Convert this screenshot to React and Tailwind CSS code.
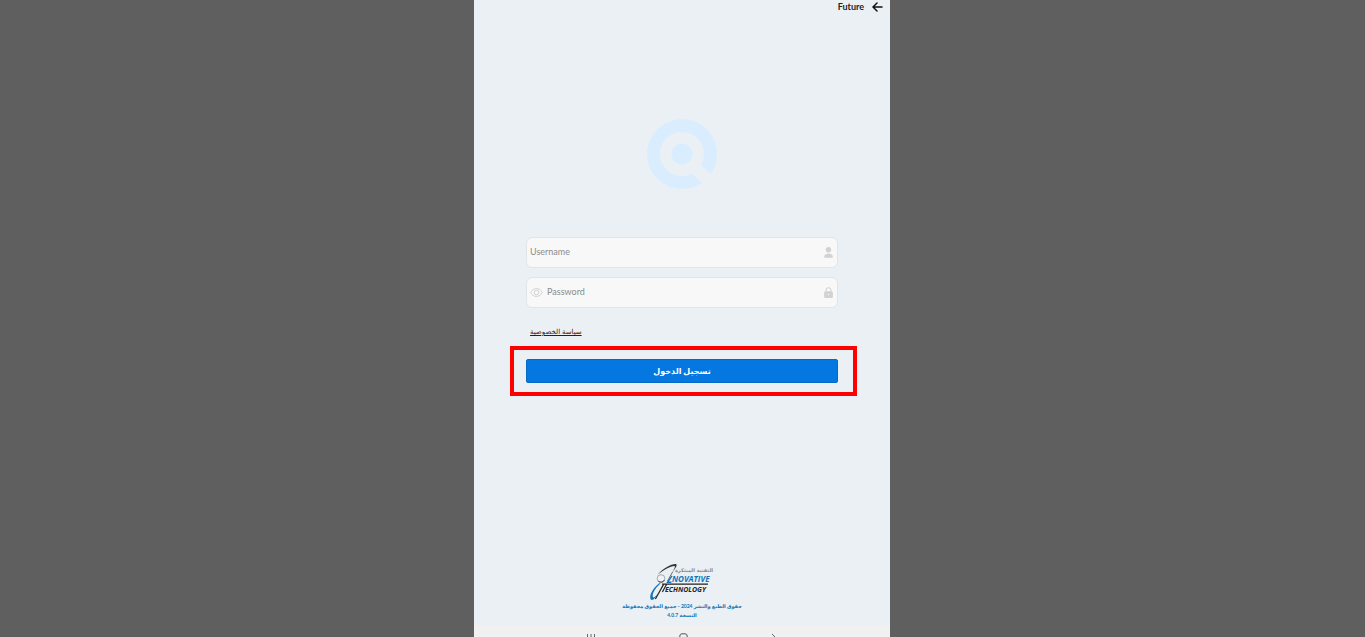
import React, { useState } from 'react'

const AppMark = () => (
  <svg viewBox="0 0 70 70" className="w-[70px] h-[70px]" aria-hidden="true">
    <path
      d="M63.67 55.07 L54 46.3 A22.1 22.1 0 1 0 45.3 54.6 L54.5 64.06 A35 35 0 1 1 63.67 55.07 Z"
      fill="#daedfe"
    />
    <circle cx="35" cy="35" r="10.5" fill="#daedfe" />
  </svg>
)

const BackArrow = () => (
  <svg viewBox="0 0 11 10" className="w-[11px] h-[10px]" fill="none" stroke="#111" strokeWidth="1.5" strokeLinecap="round" strokeLinejoin="round">
    <path d="M10 5H1.2M5 1L1 5l4 4" />
  </svg>
)

const EyeIcon = () => (
  <svg viewBox="0 0 13 9" className="w-[13px] h-[9px]" fill="none" stroke="#c9c9c9" strokeWidth="0.8">
    <path d="M0.6 4.5C2 2 4 0.6 6.5 0.6S11 2 12.4 4.5C11 7 9 8.4 6.5 8.4S2 7 0.6 4.5Z" />
    <circle cx="6.5" cy="4.5" r="2.3" />
  </svg>
)

const UserIcon = () => (
  <svg viewBox="0 0 9 11" className="w-[9px] h-[11px]" fill="#d2d2d2">
    <circle cx="4.5" cy="2.8" r="2.7" />
    <path d="M0.2 10.8V9.8C0.2 7.8 2.2 6.6 4.5 6.6S8.8 7.8 8.8 9.8V10.8Z" />
  </svg>
)

const LockIcon = () => (
  <svg viewBox="0 0 9 11" className="w-[9px] h-[11px]">
    <path d="M2 5V3.2a2.5 2.5 0 0 1 5 0V5" fill="none" stroke="#cecece" strokeWidth="1" />
    <rect x="0.1" y="4.2" width="8.8" height="6.8" rx="1.6" fill="#d2d2d2" />
    <circle cx="4.5" cy="7.4" r="0.6" fill="#f8f8f8" />
  </svg>
)

const CompanyLogo = () => (
  <svg viewBox="0 0 68 38" className="w-[68px] h-[38px]" role="img" aria-label="Innovative Technology">
    {/* Swoosh */}
    <path d="M11.5 20C4 26 0.8 33 2.8 36.6C4.8 38 7.4 35.4 9.4 31C7.2 34.2 5.4 35.2 4.8 33.8C4 31 6.6 25.6 12.5 20.5Z" fill="#1273b8" />
    <path d="M7.4 36L15.6 21.4" stroke="#222" strokeWidth="1.2" />
    <path d="M9.5 11.6C15.4 5.2 23.6 0.6 28 1C29.8 1.8 27.4 5.4 24.8 8.6C26.4 5.6 27.6 3.4 26.4 2.9C23 2.7 16.2 6.4 9.5 11.6Z" fill="#333" />
    <path d="M24.8 8.6L19.5 18" stroke="#333" strokeWidth="0.7" />
    <circle cx="13" cy="15.5" r="3.8" fill="#eef2f5" stroke="#8b969e" strokeWidth="0.8" />
    <path d="M10.4 18.2A3.8 3.8 0 0 0 16.4 17" fill="none" stroke="#333" strokeWidth="0.9" />
    {/* Wordmark */}
    <text x="65" y="9" textAnchor="end" fontSize="5" fill="#888" fontFamily="DejaVu Sans, sans-serif" direction="ltr">التقنية المبتكرة</text>
    <path d="M24 12.8L19.6 19.2H23.4" fill="none" stroke="#1273b8" strokeWidth="1.4" />
    <text x="24" y="19" fontSize="8" fontWeight="700" fontStyle="italic" fill="#1273b8" fontFamily="Open Sans, sans-serif">NOVATIVE</text>
    <path d="M14 21.2H60M18.6 21.2L14.4 29" fill="none" stroke="#222" strokeWidth="1.2" />
    <text x="17" y="29" fontSize="7" fontWeight="700" fontStyle="italic" fill="#222" fontFamily="Open Sans, sans-serif">ECHNOLOGY</text>
  </svg>
)

const App = () => {
  const [username, setUsername] = useState('')
  const [password, setPassword] = useState('')
  const [showPassword, setShowPassword] = useState(false)

  return (
    <div className="h-screen pr-px bg-[#5f5f5f] flex justify-center overflow-hidden font-['Lato','DejaVu_Sans',sans-serif]">
      <div className="w-full max-w-[416px] h-full flex flex-col bg-[#eaf0f3]">
        {/* Header */}
        <header className="flex items-center justify-end gap-2 h-[14px] px-[7px] shrink-0">
          <h1 className="text-[9px] leading-3 font-bold text-[#222]">Future</h1>
          <button type="button" aria-label="Back">
            <BackArrow />
          </button>
        </header>

        {/* Login form */}
        <main className="grow flex flex-col px-[52px] pt-[105px]">
          <div className="flex justify-center">
            <AppMark />
          </div>

          <form className="mt-12 flex flex-col" onSubmit={(e) => e.preventDefault()}>
            <div className="flex items-center h-[31px] pl-[3px] pr-1 rounded-md bg-[#f8f8f8] border border-[#e2e5e7]">
              <input
                type="text"
                aria-label="Username"
                placeholder="Username"
                value={username}
                onChange={(e) => setUsername(e.target.value)}
                className="grow min-w-0 pb-0.5 text-[9px] leading-3 text-gray-700 placeholder:text-[#8b8b8b] outline-none"
              />
              <UserIcon />
            </div>

            <div className="mt-[9px] flex items-center gap-1 h-[31px] pl-[3px] pr-1 rounded-md bg-[#f8f8f8] border border-[#e2e5e7]">
              <button type="button" aria-label="Show password" onClick={() => setShowPassword(!showPassword)}>
                <EyeIcon />
              </button>
              <input
                type={showPassword ? 'text' : 'password'}
                aria-label="Password"
                placeholder="Password"
                value={password}
                onChange={(e) => setPassword(e.target.value)}
                className="grow min-w-0 pb-0.5 text-[9px] leading-3 text-gray-700 placeholder:text-[#8b8b8b] outline-none"
              />
              <LockIcon />
            </div>

            <a href="#privacy" dir="rtl" className="mt-[17px] ml-1 self-start text-[7px] leading-3 text-[#222] underline">
              سياسة الخصوصية
            </a>

            {/* Highlighted sign-in action */}
            <div className="mt-[9px] -ml-4 -mr-[19px] border-4 border-[#ff0000] py-[9px] pl-3 pr-[15px]">
              <button
                type="submit"
                dir="rtl"
                className="block w-full h-6 rounded-xs bg-[#0477e0] border border-[#0569c8] text-[8px] leading-3 font-bold text-white"
              >
                تسجيل الدخول
              </button>
            </div>
          </form>
        </main>

        {/* Copyright */}
        <footer className="flex flex-col items-center pb-[5px] shrink-0 text-[#1273b8] font-bold text-[5px] leading-[9px]">
          <CompanyLogo />
          <p dir="rtl" className="mt-px">حقوق الطبع والنشر 2024 - جميع الحقوق محفوظة</p>
          <p dir="rtl">النسخة 4.0.7</p>
        </footer>

        {/* System navigation */}
        <nav className="flex items-start justify-between h-3 pt-2 px-[113px] shrink-0 overflow-hidden bg-[#f1f1f1]">
          <button type="button" aria-label="Recent apps">
            <svg viewBox="0 0 8 10" className="w-2 h-[10px]" stroke="#666" strokeWidth="1">
              <path d="M0.5 1V9M4 1V9M7.5 1V9" />
            </svg>
          </button>
          <button type="button" aria-label="Home">
            <svg viewBox="0 0 9 9" className="w-[9px] h-[9px]" fill="none" stroke="#555" strokeWidth="1">
              <rect x="0.8" y="0.8" width="7.4" height="7.4" rx="2.2" />
            </svg>
          </button>
          <button type="button" aria-label="Forward">
            <svg viewBox="0 0 6 10" className="w-[6px] h-[10px]" fill="none" stroke="#666" strokeWidth="1">
              <path d="M1 1L5 5L1 9" />
            </svg>
          </button>
        </nav>
      </div>
    </div>
  )
}

export default App
